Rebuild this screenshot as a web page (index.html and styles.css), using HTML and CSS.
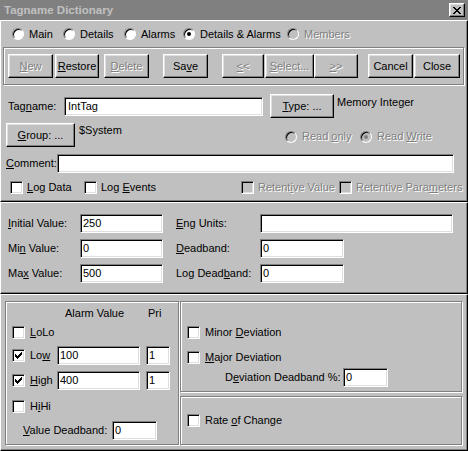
FILE: index.html
```html
<!DOCTYPE html>
<html>
<head>
<meta charset="utf-8">
<title>Tagname Dictionary</title>
<link rel="stylesheet" href="styles.css">
</head>
<body>
<div class="window">
  <div class="titlebar">
    <span class="title">Tagname Dictionary</span>
    <span class="capbtn"><svg width="8" height="7" viewBox="0 0 8 7" shape-rendering="crispEdges"><path d="M0 0h2v1H0z M6 0h2v1H6z M1 1h2v1H1z M5 1h2v1H5z M2 2h4v1H2z M3 3h2v1H3z M2 4h4v1H2z M1 5h2v1H1z M5 5h2v1H5z M0 6h2v1H0z M6 6h2v1H6z" fill="#000"/></svg></span>
  </div>

  <section class="panel top">
    <div class="modes">
      <span class="radio m-main"><span class="rb"></span><span>Main</span></span>
      <span class="radio m-det"><span class="rb"></span><span>Details</span></span>
      <span class="radio m-alm"><span class="rb"></span><span>Alarms</span></span>
      <span class="radio m-da"><span class="rb on"></span><span>Details &amp; Alarms</span></span>
      <span class="radio dis"><span class="rb off"></span><span>Members</span></span>
    </div>

    <div class="groupbox toolbar">
      <span class="btn b-new dis"><span><u>N</u>ew</span></span>
      <span class="btn b-restore"><span><u>R</u>estore</span></span>
      <span class="btn b-delete dis"><span><u>D</u>elete</span></span>
      <span class="btn b-save"><span>Sa<u>v</u>e</span></span>
      <span class="btn b-prev dis"><span><u>&lt;</u>&lt;</span></span>
      <span class="btn b-select dis"><span><u>S</u>elect...</span></span>
      <span class="btn b-next dis"><span><u>&gt;</u>&gt;</span></span>
      <span class="btn b-cancel"><span>Cancel</span></span>
      <span class="btn b-close"><span>Close</span></span>
    </div>

    <div class="row r-tag">
      <span class="lbl l-tag">Tag<u>n</u>ame:</span>
      <span class="edit e-tag">IntTag</span>
      <span class="btn b-type"><span><u>T</u>ype: ...</span></span>
      <span class="note">Memory Integer</span>
    </div>

    <div class="row r-group">
      <span class="btn b-group"><span><u>G</u>roup: ...</span></span>
      <span class="note n-sys">$System</span>
      <span class="radio dis r-ro"><span class="rb off"></span><span>Read <u>o</u>nly</span></span>
      <span class="radio dis r-rw"><span class="rb offon"></span><span>Read <u>W</u>rite</span></span>
    </div>

    <div class="row r-comment">
      <span class="lbl l-comment"><u>C</u>omment:</span>
      <span class="edit e-comment"></span>
    </div>

    <div class="row r-checks">
      <span class="check c-logdata"><span class="cb"></span><span><u>L</u>og Data</span></span>
      <span class="check c-logev"><span class="cb"></span><span>Log <u>E</u>vents</span></span>
      <span class="check dis c-retv"><span class="cb off"></span><span>Retent<u>i</u>ve Value</span></span>
      <span class="check dis"><span class="cb off"></span><span>Retentive Para<u>m</u>eters</span></span>
    </div>
  </section>

  <section class="panel values">
    <span class="lbl"><u>I</u>nitial Value:</span>
    <span class="edit e-val">250</span>
    <span></span>
    <span class="lbl"><u>E</u>ng Units:</span>
    <span class="edit e-eng"></span>

    <span class="lbl">Mi<u>n</u> Value:</span>
    <span class="edit e-val">0</span>
    <span></span>
    <span class="lbl"><u>D</u>eadband:</span>
    <span class="edit e-db">0</span>

    <span class="lbl">Ma<u>x</u> Value:</span>
    <span class="edit e-val">500</span>
    <span></span>
    <span class="lbl">Log Dead<u>b</u>and:</span>
    <span class="edit e-db">0</span>
  </section>

  <section class="panel alarms">
    <div class="groupbox limits">
      <div class="lhead"><span class="h-val">Alarm Value</span><span>Pri</span></div>
      <div class="arow a-lolo"><span class="cb"></span><span class="alab"><u>L</u>oLo</span></div>
      <div class="arow a-low"><span class="cb"><svg class="tick" width="7" height="7" viewBox="0 0 7 7" shape-rendering="crispEdges"><path d="M6 0h1v1H6z M5 1h2v1H5z M0 2h1v1H0z M4 2h3v1H4z M0 3h2v1H0z M3 3h3v1H3z M0 4h5v1H0z M1 5h3v1H1z M2 6h1v1H2z" fill="#000"/></svg></span><span class="alab">Lo<u>w</u></span><span class="edit e-alarm">100</span><span class="edit e-pri">1</span></div>
      <div class="arow a-high"><span class="cb"><svg class="tick" width="7" height="7" viewBox="0 0 7 7" shape-rendering="crispEdges"><path d="M6 0h1v1H6z M5 1h2v1H5z M0 2h1v1H0z M4 2h3v1H4z M0 3h2v1H0z M3 3h3v1H3z M0 4h5v1H0z M1 5h3v1H1z M2 6h1v1H2z" fill="#000"/></svg></span><span class="alab"><u>H</u>igh</span><span class="edit e-alarm">400</span><span class="edit e-pri">1</span></div>
      <div class="arow a-hihi"><span class="cb"></span><span class="alab">H<u>i</u>Hi</span></div>
      <div class="arow a-vdb"><span class="lbl l-vdb"><u>V</u>alue Deadband:</span><span class="edit e-small">0</span></div>
    </div>
    <div class="rightcol">
      <div class="groupbox dev">
        <div class="arow d-minor"><span class="cb"></span><span class="alab">Minor <u>D</u>eviation</span></div>
        <div class="arow d-major"><span class="cb"></span><span class="alab"><u>M</u>ajor Deviation</span></div>
        <div class="arow d-db"><span class="lbl l-devdb">D<u>e</u>viation Deadband %:</span><span class="edit e-small">0</span></div>
      </div>
      <div class="groupbox roc">
        <div class="arow d-roc"><span class="cb"></span><span class="alab">Rate <u>o</u>f Change</span></div>
      </div>
    </div>
  </section>
</div>
</body>
</html>
```

FILE: styles.css
```css
* { box-sizing: border-box; }
html, body { margin: 0; padding: 0; }
body {
  width: 468px;
  height: 451px;
  overflow: hidden;
  background: #c0c0c0;
  font-family: "Liberation Sans", Arial, sans-serif;
  font-size: 11px;
  line-height: 13px;
  color: #000;
}
u { text-decoration: underline; text-underline-offset: 1px; }

.window {
  width: 468px;
  height: 451px;
  display: flex;
  flex-direction: column;
  background: #c0c0c0;
}

/* title bar */
.titlebar {
  height: 20px;
  flex: none;
  background: #808080;
  display: flex;
  align-items: center;
  padding: 0 3px 0 4px;
}
.title {
  flex: 1;
  color: #c0c0c0;
  font-weight: bold;
  font-size: 11.5px;
}
.capbtn {
  width: 16px;
  height: 14px;
  display: flex;
  align-items: center;
  justify-content: center;
  background: #c0c0c0;
  border: 1px solid;
  border-color: #fff #000 #000 #fff;
  box-shadow: inset -1px -1px #808080, inset 1px 1px #dfdfdf;
}
.capbtn svg { display: block; }

/* raised panels */
.panel {
  flex: none;
  border: 1px solid;
  border-color: #fff #000 #000 #fff;
  box-shadow: inset -1px -1px #808080;
}
.top { height: 182px; }
.values { height: 92px; }
.alarms { flex: 1; }

/* generic controls */
.dis { color: #808080; text-shadow: 1px 1px 0 #fff; }

.btn {
  flex: none;
  display: flex;
  align-items: center;
  justify-content: center;
  height: 24px;
  background: #c0c0c0;
  border: 1px solid;
  border-color: #fff #000 #000 #fff;
  box-shadow: inset -1px -1px #808080, inset 1px 1px #dfdfdf;
  white-space: nowrap;
}

.edit {
  flex: none;
  display: flex;
  align-items: center;
  height: 19px;
  padding-left: 2px;
  background: #fff;
  border: 1px solid;
  border-color: #808080 #fff #fff #808080;
  box-shadow: inset 1px 1px #000, inset -1px -1px #dfdfdf;
  white-space: nowrap;
}

.cb {
  flex: none;
  width: 13px;
  height: 13px;
  display: flex;
  align-items: center;
  justify-content: center;
  background: #fff;
  border: 1px solid;
  border-color: #808080 #fff #fff #808080;
  box-shadow: inset 1px 1px #000, inset -1px -1px #dfdfdf;
}
.cb.off { background: #c0c0c0; }
.tick { display: block; }

.radio {
  flex: none;
  display: flex;
  align-items: center;
  gap: 5px;
  white-space: nowrap;
}
.rb {
  flex: none;
  width: 12px;
  height: 12px;
  border-radius: 50%;
  background: #fff;
  border: 1px solid;
  border-color: #808080 #fff #fff #808080;
  box-shadow: inset 1px 1px #000;
  display: flex;
  align-items: center;
  justify-content: center;
}
.rb.off, .rb.offon { background: #c0c0c0; }
.rb.on::after, .rb.offon::after {
  content: "";
  width: 4px;
  height: 4px;
  border-radius: 50%;
  background: #000;
}
.rb.offon::after { background: #808080; }

.groupbox {
  border: 1px solid #808080;
  box-shadow: inset 1px 1px #fff, 1px 1px #fff;
}

.lbl { flex: none; white-space: nowrap; }
.note { flex: none; white-space: nowrap; }

/* top panel */
.modes {
  display: flex;
  align-items: center;
  height: 14px;
  margin-top: 6px;
  padding-left: 11px;
}
.m-main { width: 51px; }
.m-det { width: 61px; }
.m-alm { width: 59px; }
.m-da { width: 104px; }

.toolbar {
  display: flex;
  margin: 6px 3px 0 2px;
  padding: 6px 0 6px 4px;
}
.b-new { width: 45px; }
.b-restore { width: 44px; margin-left: 2px; }
.b-delete { width: 45px; margin-left: 5px; }
.b-save { width: 45px; margin-left: 14px; }
.b-prev { width: 42px; margin-left: 14px; }
.b-select { width: 49px; margin-left: 1px; }
.b-next { width: 44px; }
.b-cancel { width: 45px; margin-left: 10px; }
.b-close { width: 46px; margin-left: 1px; }

.row { display: flex; align-items: center; }

.r-tag { margin-top: 9px; padding-left: 7px; }
.l-tag { width: 56px; }
.e-tag { width: 199px; padding-left: 3px; }
.b-type { width: 64px; margin-left: 7px; }
.r-tag .note { align-self: flex-start; margin: 2px 0 0 3px; }

.r-group { margin-top: 5px; padding-left: 5px; align-items: flex-start; }
.b-group { width: 69px; }
.n-sys { width: 206px; margin: 1px 0 0 4px; }
.r-ro { width: 75px; margin-top: 7px; }
.r-rw { margin-top: 7px; }

.r-comment { margin-top: 7px; padding-left: 5px; }
.l-comment { width: 51px; }
.e-comment { width: 397px; }

.r-checks { margin-top: 8px; padding-left: 9px; }
.check { flex: none; display: flex; align-items: center; gap: 4px; white-space: nowrap; }
.c-logdata { width: 74px; }
.c-logev { width: 157px; }
.c-retv { width: 98px; }

/* values panel */
.values {
  display: grid;
  grid-template-columns: 72px 83px 13px 84px auto;
  grid-template-rows: 19px 19px 19px;
  row-gap: 6px;
  align-items: center;
  align-content: start;
  padding: 11px 0 0 7px;
}
.values .edit { justify-self: start; }
.e-val { width: 83px; }
.e-eng { width: 193px; }
.e-db { width: 84px; }

/* alarms panel */
.alarms {
  display: flex;
  align-items: flex-start;
  padding: 6px 0 0 4px;
}
.limits {
  width: 174px;
  height: 144px;
  display: flex;
  flex-direction: column;
}
.lhead { display: flex; margin-top: 5px; height: 13px; padding-left: 59px; }
.h-val { width: 83px; }
.arow { display: flex; align-items: center; height: 19px; padding-left: 6px; }
.alab { flex: none; margin-left: 5px; white-space: nowrap; }
.a-lolo { margin-top: 3px; }
.a-low { margin-top: 4px; }
.a-high { margin-top: 6px; }
.a-hihi { margin-top: 7px; }
.a-vdb { margin-top: 5px; padding-left: 17px; }
.a-low .alab, .a-high .alab { width: 27px; }
.e-alarm { width: 83px; }
.e-pri { width: 24px; margin-left: 6px; }
.l-vdb { width: 89px; }
.e-small { width: 45px; }

.rightcol {
  width: 282px;
  margin-left: 1px;
  display: flex;
  flex-direction: column;
  gap: 4px;
}
.dev { height: 91px; display: flex; flex-direction: column; }
.roc { height: 49px; display: flex; flex-direction: column; }
.d-minor { margin-top: 21px; }
.d-major { margin-top: 6px; }
.d-db { margin-top: 1px; padding-left: 44px; }
.l-devdb { width: 118px; }
.d-roc { margin-top: 14px; }
```
